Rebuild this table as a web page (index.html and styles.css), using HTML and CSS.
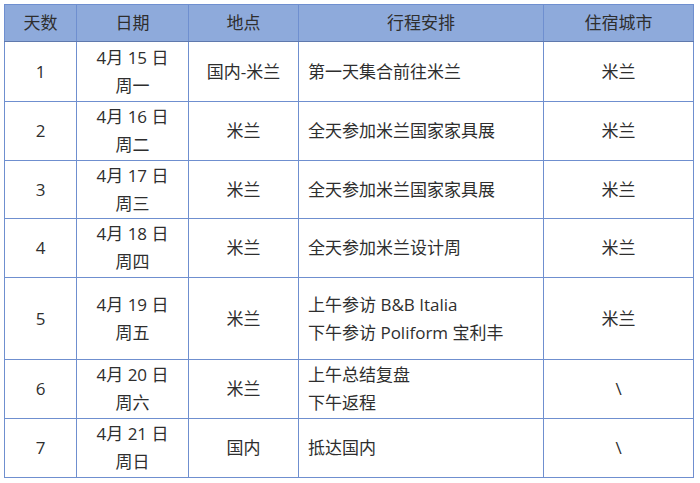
FILE: index.html
```html
<!DOCTYPE html>
<html lang="zh-CN">
<head>
<meta charset="utf-8">
<link rel="stylesheet" href="styles.css">
</head>
<body>
<div class="page">
<table class="plan">
  <colgroup>
    <col class="c-day"><col class="c-date"><col class="c-place"><col class="c-act"><col class="c-city">
  </colgroup>
  <thead>
    <tr class="head">
      <th>天数</th><th>日期</th><th>地点</th><th>行程安排</th><th>住宿城市</th>
    </tr>
  </thead>
  <tbody>
    <tr class="r1">
      <td>1</td><td>4月 15 日<br>周一</td><td>国内-米兰</td><td class="act">第一天集合前往米兰</td><td>米兰</td>
    </tr>
    <tr class="r2">
      <td>2</td><td>4月 16 日<br>周二</td><td>米兰</td><td class="act">全天参加米兰国家家具展</td><td>米兰</td>
    </tr>
    <tr class="r3">
      <td>3</td><td>4月 17 日<br>周三</td><td>米兰</td><td class="act">全天参加米兰国家家具展</td><td>米兰</td>
    </tr>
    <tr class="r4">
      <td>4</td><td>4月 18 日<br>周四</td><td>米兰</td><td class="act">全天参加米兰设计周</td><td>米兰</td>
    </tr>
    <tr class="r5">
      <td>5</td><td>4月 19 日<br>周五</td><td>米兰</td><td class="act">上午参访 B&amp;B Italia<br>下午参访 Poliform 宝利丰</td><td>米兰</td>
    </tr>
    <tr class="r6">
      <td>6</td><td>4月 20 日<br>周六</td><td>米兰</td><td class="act">上午总结复盘<br>下午返程</td><td>\</td>
    </tr>
    <tr class="r7">
      <td>7</td><td>4月 21 日<br>周日</td><td>国内</td><td class="act">抵达国内</td><td>\</td>
    </tr>
  </tbody>
</table>
</div>
</body>
</html>
```

FILE: styles.css
```css
html, body {
  margin: 0;
  padding: 0;
  background: #ffffff;
}
.page {
  padding: 4px 0 0 4px;
  width: 700px;
  height: 483px;
  box-sizing: border-box;
}
.plan {
  border-collapse: collapse;
  table-layout: fixed;
  width: 689px;
  font-family: "Open Sans", "Noto Sans CJK SC", sans-serif;
  font-size: 17px;
  color: #2e2e2e;
}
.c-day { width: 72px; }
.c-date { width: 112px; }
.c-place { width: 110px; }
.c-act { width: 245px; }
.c-city { width: 150px; }
.plan th, .plan td {
  border: 1px solid #6f8fcf;
  text-align: center;
  vertical-align: middle;
  padding: 0;
  line-height: 28px;
  font-weight: normal;
}
.plan th {
  background: #8eaadb;
  border-bottom-color: #5f79ad;
}
.plan td.act {
  text-align: left;
  padding-left: 9px;
}
.head { height: 37px; }
.r1 { height: 60px; }
.r2 { height: 59px; }
.r3 { height: 58px; }
.r4 { height: 59px; }
.r5 { height: 82px; }
.r6 { height: 59px; }
.r7 { height: 59px; }
```
